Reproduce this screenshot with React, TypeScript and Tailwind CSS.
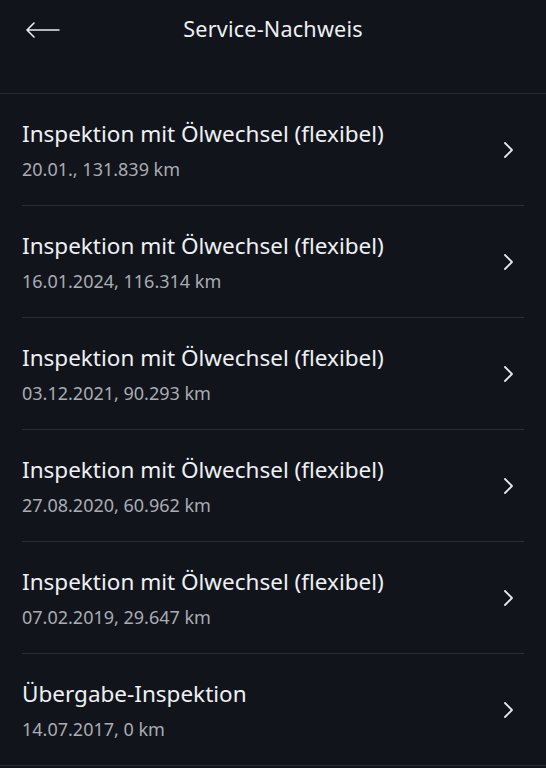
const items = [
  { title: 'Inspektion mit Ölwechsel (flexibel)', sub: '20.01., 131.839 km' },
  { title: 'Inspektion mit Ölwechsel (flexibel)', sub: '16.01.2024, 116.314 km' },
  { title: 'Inspektion mit Ölwechsel (flexibel)', sub: '03.12.2021, 90.293 km' },
  { title: 'Inspektion mit Ölwechsel (flexibel)', sub: '27.08.2020, 60.962 km' },
  { title: 'Inspektion mit Ölwechsel (flexibel)', sub: '07.02.2019, 29.647 km' },
  { title: 'Übergabe-Inspektion', sub: '14.07.2017, 0 km' },
]

function Chevron() {
  return (
    <svg className="w-[12px] h-[18px]" viewBox="0 0 12 18" fill="none" stroke="currentColor">
      <path d="M3 2l7 7-7 7" strokeWidth={1.8} strokeLinecap="round" strokeLinejoin="round" />
    </svg>
  )
}

export default function App() {
  return (
    <div className="w-[546px] h-[768px] overflow-hidden bg-[#11141b] text-[#eef0f3] font-['Noto_Sans',sans-serif]">
      <header className="relative h-[94px] border-b border-[#262931] flex justify-center pt-[14px]">
        <svg className="absolute left-[25px] top-[22px] w-[35px] h-[16px]" viewBox="0 0 35 16" fill="none" stroke="#e8eaee">
          <path d="M34 8H2M9 1L2 8l7 7" strokeWidth={1.6} strokeLinecap="round" strokeLinejoin="round" />
        </svg>
        <h1 className="text-[21.6px] leading-[30px] tracking-[0.2px]">Service-Nachweis</h1>
      </header>
      <ul>
        {items.map((item, i) => (
          <li
            key={i}
            className={`h-[112px] border-b flex items-center justify-between ${
              i === items.length - 1 ? 'mx-0 px-[22px] border-[#2a2d35]' : 'mx-[22px] border-[#2a2d35]'
            }`}
          >
            <div>
              <div className="text-[22.5px] leading-[28px] text-[#eef0f3]">{item.title}</div>
              <div className="mt-[10px] text-[18px] leading-[22px] text-[#a9acb3]">{item.sub}</div>
            </div>
            <div className="mr-[10px] text-[#e8eaee]">
              <Chevron />
            </div>
          </li>
        ))}
      </ul>
    </div>
  )
}
